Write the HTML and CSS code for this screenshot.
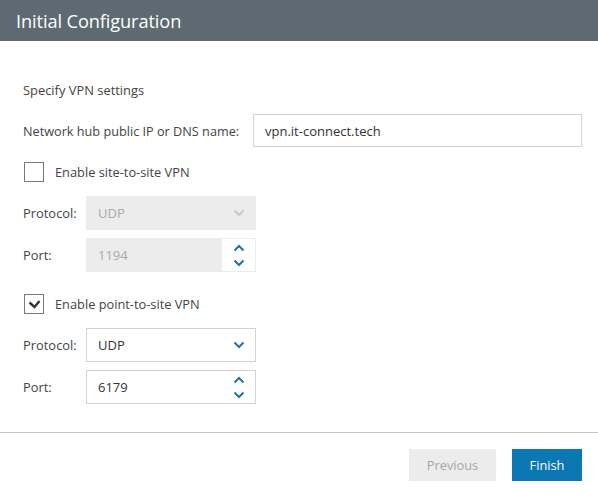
FILE: index.html
```html
<!DOCTYPE html>
<html>
<head>
<meta charset="utf-8">
<link rel="stylesheet" href="styles.css">
</head>
<body>
<div class="header"><span class="title">Initial Configuration</span></div>
<div class="content">
  <div class="intro">Specify VPN settings</div>
  <div class="row hub">
    <label class="hub-label">Network hub public IP or DNS name:</label>
    <div class="field wide"><span class="val">vpn.it-connect.tech</span></div>
  </div>
  <div class="check-row c1">
    <span class="box"></span>
    <span class="check-label">Enable site-to-site VPN</span>
  </div>
  <div class="row r-proto1">
    <label class="lbl">Protocol:</label>
    <div class="field small disabled">
      <span class="val">UDP</span>
      <svg class="chev" width="12" height="8" viewBox="0 0 12 8"><path d="M1.5 1.5 L6 6 L10.5 1.5" fill="none" stroke="#c8c8c8" stroke-width="2"/></svg>
    </div>
  </div>
  <div class="row r-port1">
    <label class="lbl">Port:</label>
    <div class="field small disabled spinner">
      <span class="val">1194</span>
      <div class="spin">
        <svg width="12" height="8" viewBox="0 0 12 8"><path d="M1.5 6.5 L6 2 L10.5 6.5" fill="none" stroke="#1f73a6" stroke-width="2"/></svg>
        <svg width="12" height="8" viewBox="0 0 12 8"><path d="M1.5 1.5 L6 6 L10.5 1.5" fill="none" stroke="#1f73a6" stroke-width="2"/></svg>
      </div>
    </div>
  </div>
  <div class="check-row c2">
    <span class="box checked"><svg width="13" height="10" viewBox="0 0 13 10"><path d="M1.5 3.5 L6.5 8 L11.5 2" fill="none" stroke="#333" stroke-width="2.4"/></svg></span>
    <span class="check-label">Enable point-to-site VPN</span>
  </div>
  <div class="row r-proto2">
    <label class="lbl">Protocol:</label>
    <div class="field small">
      <span class="val">UDP</span>
      <svg class="chev" width="12" height="8" viewBox="0 0 12 8"><path d="M1.5 1.5 L6 6 L10.5 1.5" fill="none" stroke="#1f73a6" stroke-width="2"/></svg>
    </div>
  </div>
  <div class="row r-port2">
    <label class="lbl">Port:</label>
    <div class="field small spinner">
      <span class="val">6179</span>
      <div class="spin">
        <svg width="12" height="8" viewBox="0 0 12 8"><path d="M1.5 6.5 L6 2 L10.5 6.5" fill="none" stroke="#1f73a6" stroke-width="2"/></svg>
        <svg width="12" height="8" viewBox="0 0 12 8"><path d="M1.5 1.5 L6 6 L10.5 1.5" fill="none" stroke="#1f73a6" stroke-width="2"/></svg>
      </div>
    </div>
  </div>
</div>
<div class="footer">
  <button class="btn prev">Previous</button>
  <button class="btn finish">Finish</button>
</div>
</body>
</html>
```
FILE: styles.css
```css
* { box-sizing: border-box; }
html, body { margin: 0; padding: 0; background: #fff; }
body {
  font-family: "Open Sans", "Noto Sans", sans-serif;
  color: #444;
  font-size: 12.8px;
  width: 598px;
  height: 495px;
  overflow: hidden;
}
.header {
  height: 41px;
  background: #5e6a71;
  display: flex;
  align-items: center;
  padding-left: 16px;
}
.title {
  color: #fff;
  font-size: 18.2px;
  letter-spacing: -0.1px;
}
.content {
  padding: 0 16px 0 23px;
}
.intro {
  margin-top: 40px;
  height: 18px;
  line-height: 18px;
  font-size: 12.9px;
  color: #444;
}
.row {
  display: flex;
  align-items: center;
}
.hub { margin-top: 15px; height: 33px; }
.hub-label { width: 230px; font-size: 12.7px; }
.lbl { width: 63px; font-size: 12.9px; }
.field {
  height: 100%;
  border: 1px solid #d3d3d3;
  display: flex;
  align-items: center;
  padding-left: 11px;
  font-size: 13px;
  color: #333;
  position: relative;
}
.field.wide { flex: 1; }
.field.small { width: 170px; padding-right: 10px; justify-content: space-between; }
.field.disabled { background: #ececec; border-color: #ececec; color: #a9a9a9; }
.field.spinner { padding-right: 0; }
.spin {
  width: 33px;
  height: 100%;
  background: #fff;
  display: flex;
  flex-direction: column;
  align-items: center;
  justify-content: center;
  gap: 7px;
}
.chev { display: block; }
.check-row {
  display: flex;
  align-items: center;
  height: 20px;
  padding-left: 1px;
}
.c1 { margin-top: 15px; }
.c2 { margin-top: 22px; }
.box {
  width: 20px;
  height: 20px;
  border: 1px solid #7a7a7a;
  display: flex;
  align-items: center;
  justify-content: center;
  background: #fff;
}
.check-label { margin-left: 11px; font-size: 12.8px; color: #444; }
.r-proto1 { margin-top: 14px; height: 34px; }
.r-port1 { margin-top: 8px; height: 34px; }
.r-proto2 { margin-top: 14px; height: 34px; }
.r-port2 { margin-top: 8px; height: 34px; }
.footer {
  margin-top: 28px;
  border-top: 1px solid #c4c4c4;
  display: flex;
  justify-content: flex-end;
  gap: 16px;
  padding: 16px 16px 0 0;
}
.btn {
  height: 32px;
  border: none;
  font-family: "Open Sans", "Noto Sans", sans-serif;
  font-size: 12.8px;
  padding: 0;
}
.prev { width: 87px; background: #ececec; color: #a5a5a5; }
.finish { width: 70px; background: #0b77b3; color: #fff; }
```
